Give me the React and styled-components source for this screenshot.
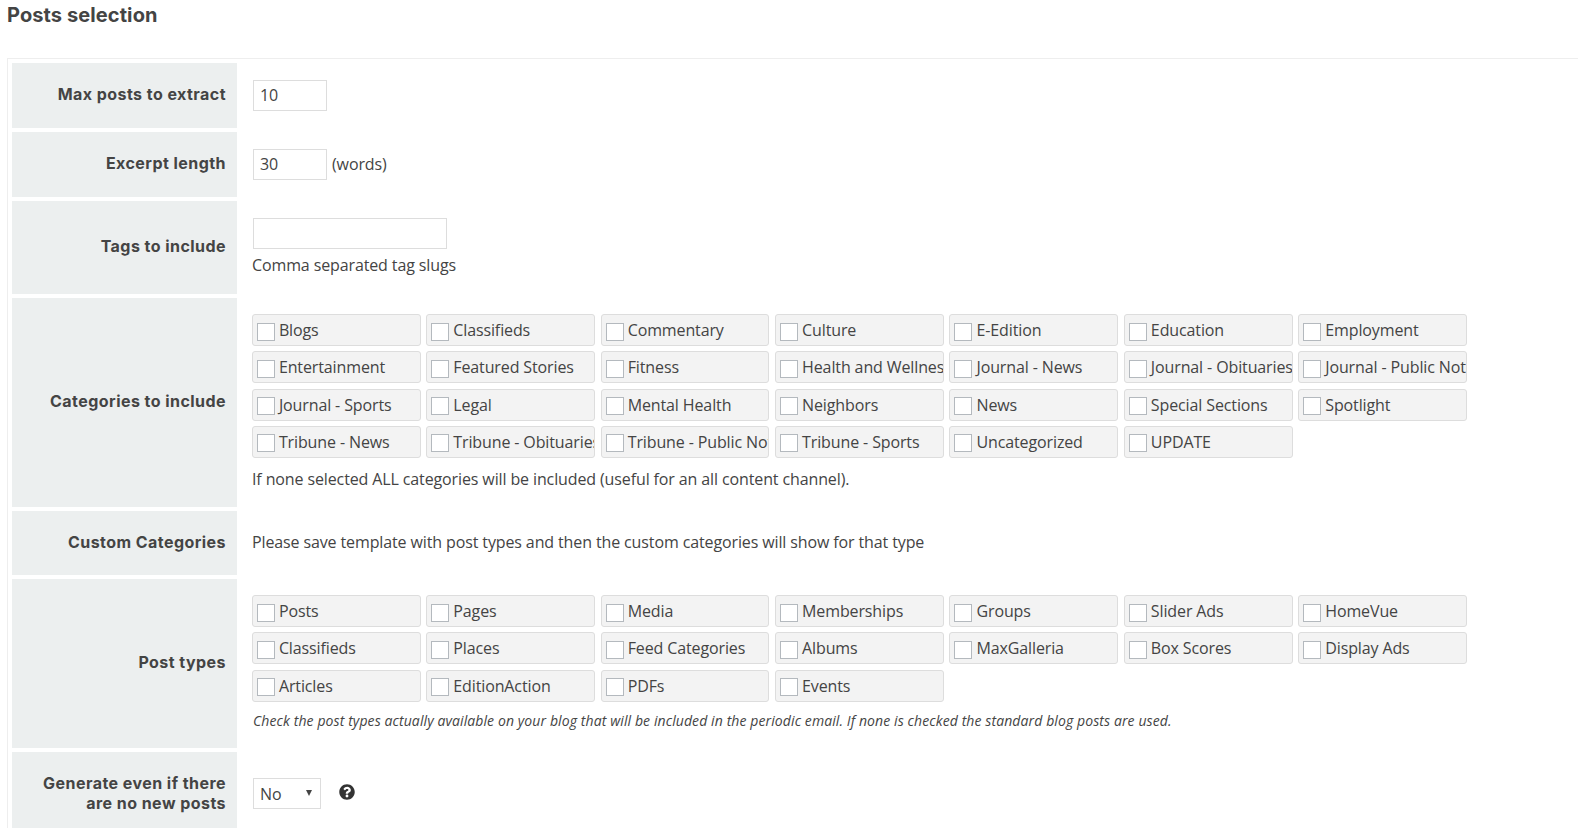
import React from 'react';
import styled, { createGlobalStyle } from 'styled-components';
import { FaQuestionCircle } from 'react-icons/fa';

const Global = createGlobalStyle`
  html, body { margin: 0; padding: 0; background: #fff; overflow: hidden; height: 828px; }
  body { font-family: "Open Sans", "Noto Sans", sans-serif; font-size: 16px; letter-spacing: -0.12px; color: #444; }
`;

const Page = styled.div`
  width: 1578px;
  height: 828px;
  overflow: hidden;
  padding-left: 7px;
  box-sizing: border-box;
`;

const Heading = styled.h2`
  margin: 0;
  height: 58px;
  padding-top: 2px;
  box-sizing: border-box;
  font-family: Inter, "Liberation Sans", sans-serif;
  font-size: 20px;
  font-weight: 700;
  line-height: 26px;
  letter-spacing: 0.1px;
  color: #444;
`;

const Form = styled.div`
  display: flex;
  flex-direction: column;
  gap: 4px;
  padding: 4px;
  border: 1px solid #eeeeee;
  border-right: none;
`;

const Row = styled.div`
  display: grid;
  grid-template-columns: 225px 1fr;
  min-height: ${p => p.$height}px;
`;

const Label = styled.div`
  background: #ecefef;
  display: flex;
  align-items: center;
  justify-content: flex-end;
  text-align: right;
  box-sizing: border-box;
  padding: ${p => p.$pad ?? '0 11px 4px 10px'};
  font-family: Inter, "Liberation Sans", sans-serif;
  font-size: 16px;
  font-weight: 700;
  line-height: 20px;
  letter-spacing: 0.45px;
  color: #444;
`;

const Value = styled.div`
  padding: ${p => p.$top ?? 17}px 0 0 16px;
  display: ${p => (p.$inline ? 'flex' : 'block')};
  align-items: ${p => (p.$inline ? 'flex-start' : 'stretch')};
`;

const TextInput = styled.input`
  display: block;
  width: ${p => p.$width}px;
  height: 31px;
  box-sizing: border-box;
  border: 1px solid #dddddd;
  border-radius: 0;
  padding: 0 6px 2px;
  outline: none;
  font: 16px/24px "Open Sans", sans-serif;
  letter-spacing: -0.12px;
  color: #444;
  background: #fff;
`;

const Suffix = styled.span`
  margin-left: 5px;
  line-height: 31px;
`;

const Hint = styled.div`
  line-height: 24px;
  margin: ${p => p.$gap ?? 4}px 0 0 -1px;
`;

const Plain = styled.div`
  line-height: 24px;
  margin-left: -1px;
`;

const Note = styled.div`
  font-size: 14px;
  font-style: italic;
  line-height: 20px;
  letter-spacing: 0.1px;
  margin-top: ${p => p.$gap ?? 9}px;
`;

const ChipGrid = styled.div`
  display: grid;
  grid-template-columns: repeat(7, 168.8px);
  column-gap: 5.6px;
  grid-auto-rows: 32px;
  row-gap: 5.33px;
  margin-left: -1.1px;
`;

const Chip = styled.label`
  display: flex;
  align-items: center;
  background: #f3f3f3;
  border: 1px solid #dddddd;
  border-radius: 3px;
  box-sizing: border-box;
  overflow: hidden;
  white-space: nowrap;
  padding-left: 4px;
  color: #444;
`;

const Box = styled.span`
  flex: none;
  width: 18px;
  height: 18px;
  box-sizing: border-box;
  background: #fff;
  border: 1px solid #b4b9be;
  margin: 3px 4px 0 0;
`;

const SelectWrap = styled.div`
  position: relative;
  width: 68px;
  height: 31px;
  &::after {
    content: '';
    position: absolute;
    right: 9px;
    top: 12px;
    border-style: solid;
    border-width: 6px 3.5px 0 3.5px;
    border-color: #444 transparent transparent transparent;
    pointer-events: none;
  }
`;

const Select = styled.select`
  appearance: none;
  width: 100%;
  height: 100%;
  border: 1px solid #dddddd;
  border-radius: 0;
  background: #fff;
  padding: 0 6px;
  font: 16px "Open Sans", sans-serif;
  letter-spacing: -0.12px;
  color: #444;
  outline: none;
`;

const Help = styled.span`
  margin: 6px 0 0 18px;
  display: block;
  line-height: 0;
  font-size: 16px;
  color: #333;
`;

const categories = ['Blogs','Classifieds','Commentary','Culture','E-Edition','Education','Employment','Entertainment','Featured Stories','Fitness','Health and Wellness','Journal - News','Journal - Obituaries','Journal - Public Notices','Journal - Sports','Legal','Mental Health','Neighbors','News','Special Sections','Spotlight','Tribune - News','Tribune - Obituaries','Tribune - Public Notices','Tribune - Sports','Uncategorized','UPDATE'];
const postTypes = ['Posts','Pages','Media','Memberships','Groups','Slider Ads','HomeVue','Classifieds','Places','Feed Categories','Albums','MaxGalleria','Box Scores','Display Ads','Articles','EditionAction','PDFs','Events'];

const Chips = ({ items }) => (
  <ChipGrid>
    {items.map(t => (
      <Chip key={t}><Box />{t}</Chip>
    ))}
  </ChipGrid>
);

export default function App() {
  return (
    <Page>
      <Global />
      <Heading>Posts selection</Heading>
      <Form>
        <Row $height={65}>
          <Label>Max posts to extract</Label>
          <Value $inline><TextInput $width={74} defaultValue="10" /></Value>
        </Row>
        <Row $height={65}>
          <Label>Excerpt length</Label>
          <Value $inline><TextInput $width={74} defaultValue="30" /><Suffix>(words)</Suffix></Value>
        </Row>
        <Row $height={93}>
          <Label>Tags to include</Label>
          <Value>
            <TextInput $width={194} />
            <Hint>Comma separated tag slugs</Hint>
          </Value>
        </Row>
        <Row $height={209}>
          <Label>Categories to include</Label>
          <Value $top={16}>
            <Chips items={categories} />
            <Hint $gap={9}>If none selected ALL categories will be included (useful for an all content channel).</Hint>
          </Value>
        </Row>
        <Row $height={64}>
          <Label $pad="0 11px 2px 10px">Custom Categories</Label>
          <Value $top={19}><Plain>Please save template with post types and then the custom categories will show for that type</Plain></Value>
        </Row>
        <Row $height={169}>
          <Label>Post types</Label>
          <Value $top={16}>
            <Chips items={postTypes} />
            <Note>Check the post types actually available on your blog that will be included in the periodic email. If none is checked the standard blog posts are used.</Note>
          </Value>
        </Row>
        <Row $height={80}>
          <Label $pad="2px 11px 0 10px">Generate even if there<br />are no new posts</Label>
          <Value $inline $top={26}>
            <SelectWrap>
              <Select defaultValue="No"><option>No</option><option>Yes</option></Select>
            </SelectWrap>
            <Help><FaQuestionCircle /></Help>
          </Value>
        </Row>
      </Form>
    </Page>
  );
}
